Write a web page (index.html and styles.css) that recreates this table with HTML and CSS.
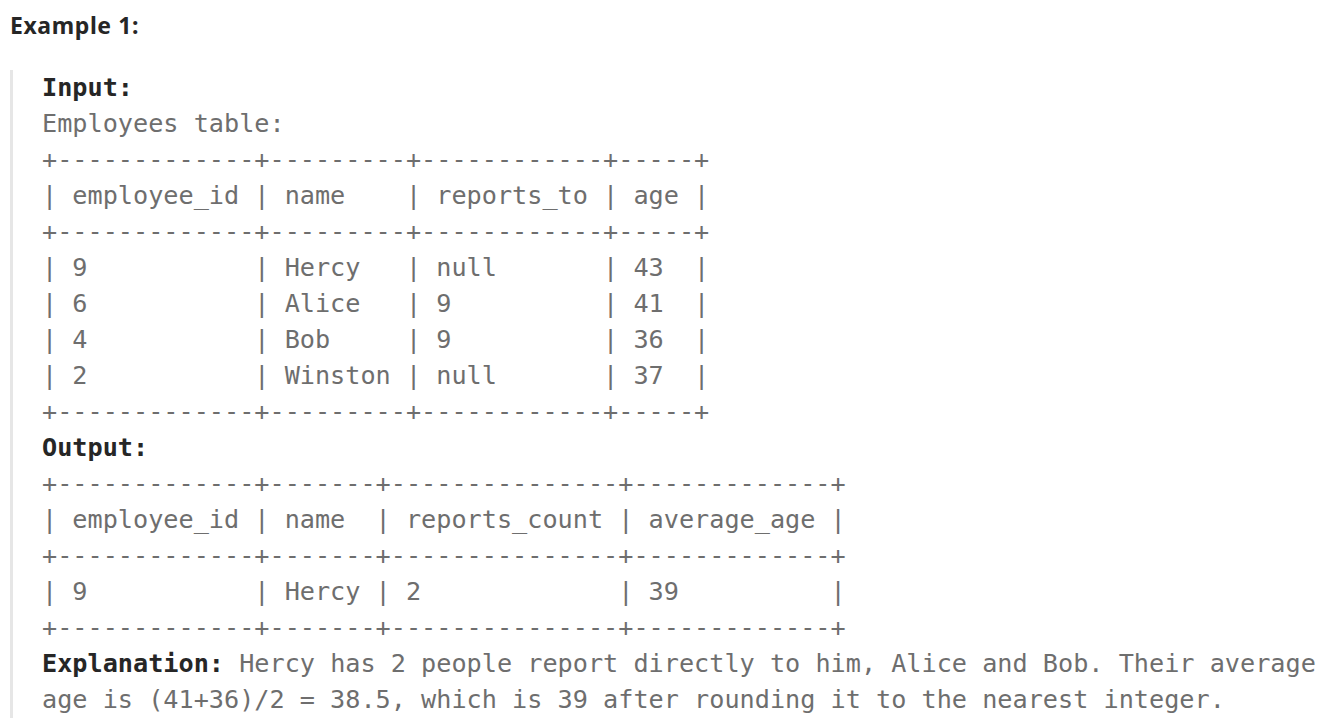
FILE: index.html
```html
<!DOCTYPE html>
<html lang="en">
<head>
<meta charset="utf-8">
<title>Example 1</title>
<link rel="stylesheet" href="styles.css">
</head>
<body>
<div class="example">
<p class="heading">Example 1:</p>
<pre class="block"><strong>Input:</strong>
Employees table:
+-------------+---------+------------+-----+
| employee_id | name    | reports_to | age |
+-------------+---------+------------+-----+
| 9           | Hercy   | null       | 43  |
| 6           | Alice   | 9          | 41  |
| 4           | Bob     | 9          | 36  |
| 2           | Winston | null       | 37  |
+-------------+---------+------------+-----+
<strong>Output:</strong>
+-------------+-------+---------------+-------------+
| employee_id | name  | reports_count | average_age |
+-------------+-------+---------------+-------------+
| 9           | Hercy | 2             | 39          |
+-------------+-------+---------------+-------------+
<strong>Explanation:</strong> Hercy has 2 people report directly to him, Alice and Bob. Their average
age is (41+36)/2 = 38.5, which is 39 after rounding it to the nearest integer.</pre>
</div>
</body>
</html>
```
FILE: styles.css
```css
html, body {
  margin: 0;
  padding: 0;
  background: #ffffff;
}

.example {
  padding: 7px 0 0 10px;
}

.heading {
  margin: 0;
  font-family: "Noto Sans", "Open Sans", sans-serif;
  font-weight: 700;
  font-size: 23px;
  letter-spacing: 0.6px;
  line-height: 36px;
  color: #262626;
}

.block {
  margin: 27px 0 0 0;
  padding: 0 0 0 29px;
  border-left: 3px solid #e6e6e6;
  font-family: "DejaVu Sans Mono", "Liberation Mono", monospace;
  font-size: 25.2px;
  line-height: 36px;
  color: #6e6e6e;
  white-space: pre;
}

.block strong {
  font-weight: 700;
  color: #262626;
}
```
